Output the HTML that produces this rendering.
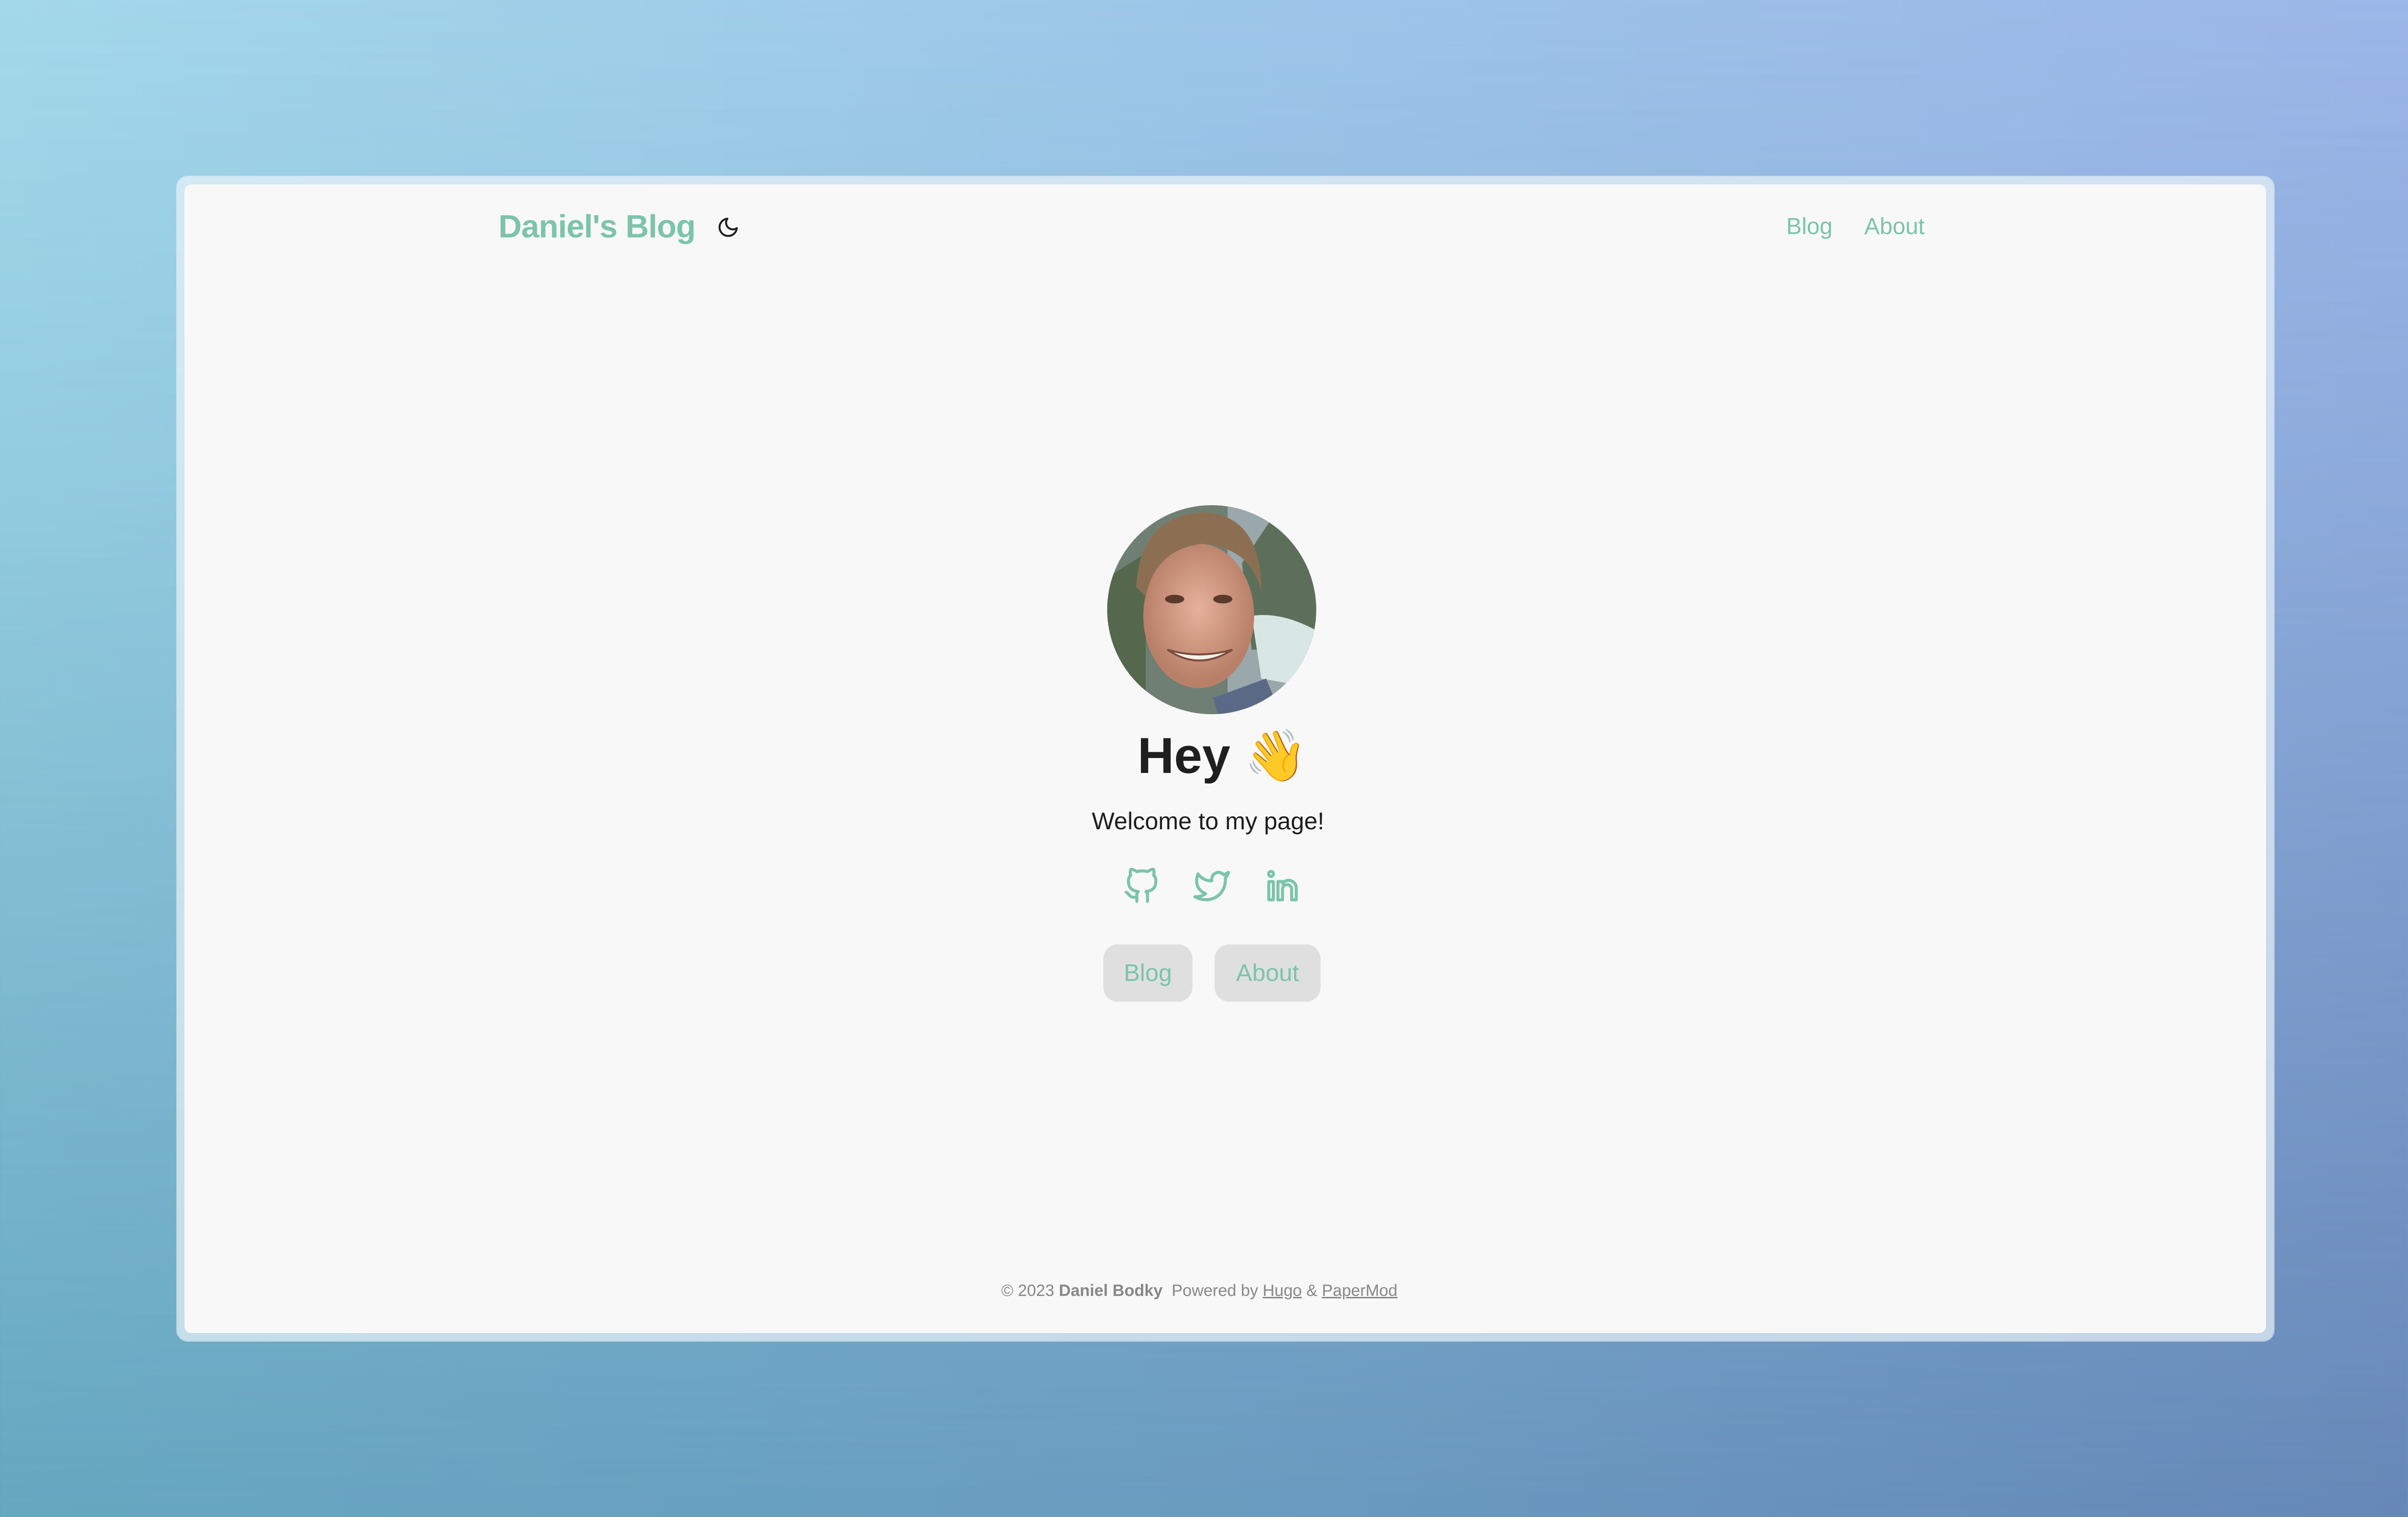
<!DOCTYPE html>
<html><head><meta charset="utf-8"><style>
html,body{margin:0;padding:0}
body{width:5088px;height:3150px;position:relative;overflow:hidden;font-family:"Liberation Sans",Arial,sans-serif;
background:linear-gradient(90deg,#66a8c0 0%,#6a9cc0 50%,#6688b8 100%);}
.bgtop{position:absolute;left:0;top:0;width:5088px;height:3150px;background:linear-gradient(90deg,#a3d8ea 0%,#9dc6e8 50%,#9bb5e8 100%);-webkit-mask-image:linear-gradient(180deg,#000 0%,rgba(0,0,0,0.75) 30%,rgba(0,0,0,0) 100%);mask-image:linear-gradient(180deg,#000 0%,rgba(0,0,0,0.75) 30%,rgba(0,0,0,0) 100%)}
.frame{position:absolute;left:368px;top:367px;width:4353px;height:2417px;border-radius:22px;background:rgba(235,244,250,0.7);box-shadow:0 0 0 2px rgba(255,255,255,0.5)}
.inner{position:absolute;left:383px;top:383px;width:4322px;height:2385px;border-radius:14px;background:#f8f8f8}
.abs{position:absolute;white-space:nowrap}
.green{color:#7cc4aa}
.btn{position:absolute;top:1961px;height:119px;background:#dfdfdf;border-radius:30px;color:#7cc4aa;font-size:50px;line-height:119px;text-align:center}
svg.ic{position:absolute;top:1802px;width:76px;height:76px;fill:none;stroke:#7cc4aa;stroke-width:2;stroke-linecap:round;stroke-linejoin:round}
</style></head><body>
<div class="bgtop"></div>
<div class="frame"></div>
<div class="inner"></div>
<div class="abs green" style="left:1035px;top:428px;font-size:67px;font-weight:bold;line-height:86px;letter-spacing:-1px">Daniel's Blog</div>
<svg style="position:absolute;left:1488px;top:448px;width:48px;height:48px" viewBox="0 0 24 24" fill="none" stroke="#1e1e1e" stroke-width="2" stroke-linecap="round" stroke-linejoin="round"><path d="M21 12.79A9 9 0 1 1 11.21 3 7 7 0 0 0 21 12.79z"/></svg>
<div class="abs green" style="left:3709px;top:441px;font-size:48px;line-height:60px">Blog</div>
<div class="abs green" style="left:3871px;top:441px;font-size:48px;line-height:60px">About</div>

<svg style="position:absolute;left:2299px;top:1049px;width:434px;height:434px" viewBox="0 0 434 434">
<defs><clipPath id="c"><circle cx="217" cy="217" r="217"/></clipPath>
<radialGradient id="sk" cx="0.5" cy="0.45" r="0.5"><stop offset="0" stop-color="#e6b09a"/><stop offset="1" stop-color="#b88068"/></radialGradient></defs>
<g clip-path="url(#c)">
<rect width="434" height="434" fill="#6f7f74"/>
<path d="M250 0 L434 0 L434 434 L250 434Z" fill="#9aa8ac"/>
<path d="M280 120 L340 30 L434 90 L434 300 L300 300Z" fill="#5d6f5a"/>
<path d="M300 230 Q360 220 434 260 L434 380 L320 360Z" fill="#d8e6e4"/>
<path d="M0 150 L80 100 L80 434 L0 434Z" fill="#55684e"/>
<ellipse cx="190" cy="230" rx="115" ry="150" fill="url(#sk)"/>
<path d="M60 170 Q70 20 200 15 Q320 20 320 180 Q300 90 200 80 Q100 90 80 190Z" fill="#8c6f52"/>
<ellipse cx="140" cy="195" rx="20" ry="9" fill="#5a3a2c"/>
<ellipse cx="240" cy="195" rx="20" ry="9" fill="#5a3a2c"/>
<path d="M125 300 Q190 345 260 300 Q190 320 125 300Z" fill="#f4f0ea" stroke="#7a4a3a" stroke-width="4"/>
<path d="M220 400 L330 360 L360 434 L230 434Z" fill="#5a6a86"/>
</g></svg>

<div class="abs" style="left:2362px;top:1510px;font-size:105px;font-weight:bold;line-height:120px;color:#1f1f1f">Hey <span style="font-family:'Noto Color Emoji','DejaVu Sans',sans-serif;font-weight:normal">👋</span></div>
<div class="abs" style="left:2267px;top:1675px;font-size:50px;line-height:60px;color:#1e1e1e">Welcome to my page!</div>

<svg class="ic" style="left:2332px" viewBox="0 0 24 24"><path d="M9 19c-5 1.5-5-2.5-7-3m14 6v-3.87a3.37 3.37 0 0 0-.94-2.61c3.140-.35 6.44-1.54 6.44-7A5.440 5.44 0 0 0 20 4.77 5.07 5.07 0 0 0 19.91 1S18.73.65 16 2.48a13.38 13.38 0 0 0-7 0C6.27.65 5.09 1 5.09 1A5.07 5.07 0 0 0 5 4.77a5.44 5.44 0 0 0-1.5 3.78c0 5.42 3.3 6.61 6.44 7A3.37 3.37 0 0 0 9 18.13V22"/></svg>
<svg class="ic" style="left:2478px" viewBox="0 0 24 24"><path d="M23 3a10.9 10.9 0 0 1-3.14 1.53 4.48 4.48 0 0 0-7.86 3v1A10.66 10.66 0 0 1 3 4s-4 9 5 13a11.64 11.64 0 0 1-7 2c9 5 20 0 20-11.5a4.5 4.5 0 0 0-.08-.83A7.72 7.72 0 0 0 23 3z"/></svg>
<svg class="ic" style="left:2625px" viewBox="0 0 24 24"><circle cx="4.5" cy="4" r="1.6"/><rect x="3" y="9" width="3" height="12" rx=".3"/><path d="M9 21V9h3v1.2A5 5 0 0 1 21 13v8h-3v-7a3 3 0 0 0-6 0v7z"/></svg>

<div class="btn" style="left:2291px;width:185px">Blog</div>
<div class="btn" style="left:2522px;width:220px">About</div>

<div class="abs" style="left:2079px;top:2658px;font-size:34px;line-height:44px;color:#888">© 2023 <b>Daniel Bodky</b> &nbsp;Powered by <u>Hugo</u> &amp; <u>PaperMod</u></div>
</body></html>
